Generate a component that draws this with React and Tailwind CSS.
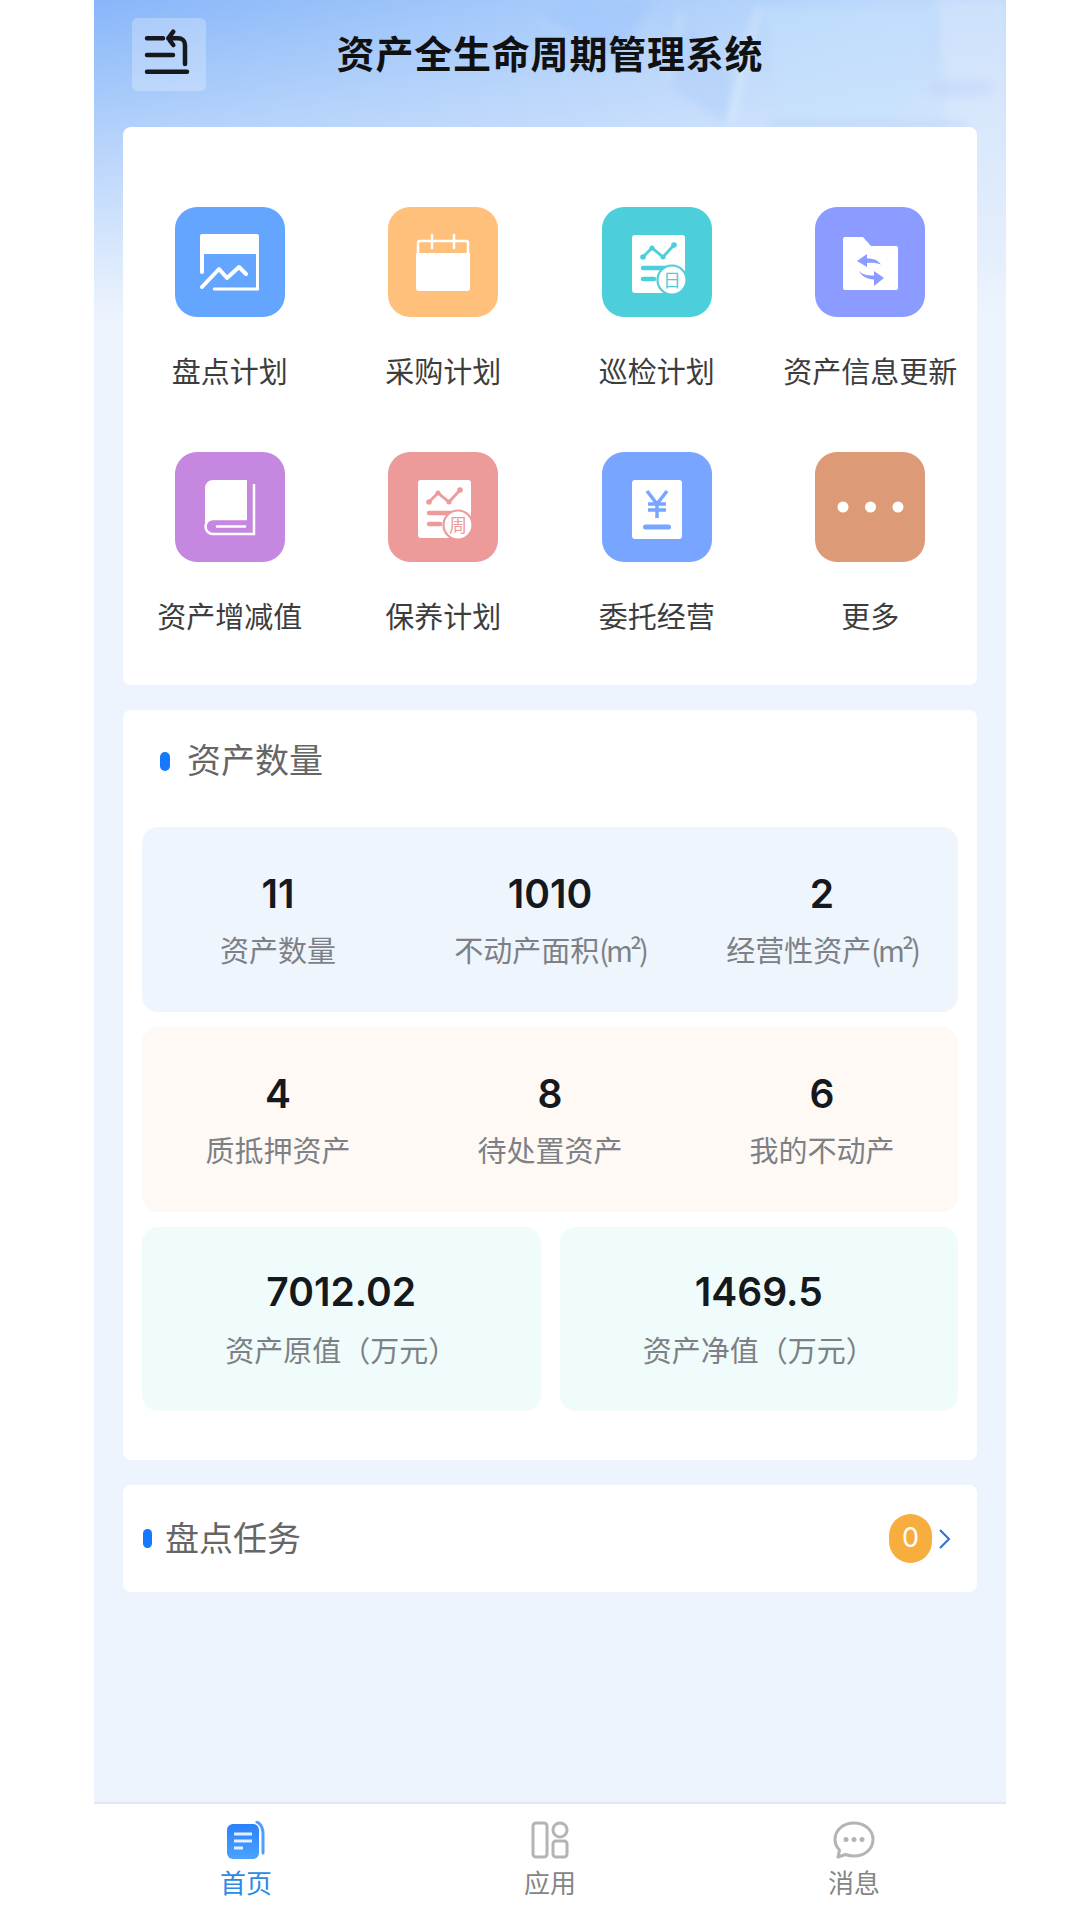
const ChartDoc = ({ color, mark }) => (
  <>
    <path d="M33 28h47a3 3 0 0 1 3 3v42a13 13 0 0 1-13 13H33a3 3 0 0 1-3-3V31a3 3 0 0 1 3-3z" fill="#fff" />
    <polyline points="41,50 50,41 61,50 72,38" fill="none" stroke={color} strokeWidth="2.800" />
    <circle cx="41" cy="50" r="2.800" fill={color} />
    <circle cx="50" cy="41" r="2.500" fill={color} />
    <circle cx="61" cy="50" r="2.500" fill={color} />
    <circle cx="72" cy="38" r="2.800" fill={color} />
    <line x1="41" y1="61" x2="71" y2="61" stroke={color} strokeWidth="4.500" strokeLinecap="round" />
    <line x1="41" y1="72" x2="52" y2="72" stroke={color} strokeWidth="4.500" strokeLinecap="round" />
    <circle cx="70" cy="73" r="14.500" fill="#fff" stroke={color} strokeWidth="2.200" />
    <text x="70" y="79.500" textAnchor="middle" fontSize="18" fill={color} fontFamily="Noto Sans CJK SC, sans-serif">
      {mark}
    </text>
  </>
);

const menuIcons = {
  plan: (
    <>
      <path d="M25 29a2 2 0 0 1 2-2h55a2 2 0 0 1 2 2v54H81V47H29v18a2 2 0 0 1-4 0z" fill="#fff" />
      <polyline points="27,80 44,62 52,71 64,60 71,67" fill="none" stroke="#fff" strokeWidth="4" strokeLinecap="round" strokeLinejoin="round" />
      <rect x="38" y="80.500" width="46" height="3" rx="1" fill="#fff" />
    </>
  ),
  buy: (
    <>
      <path d="M30 47V36a2 2 0 0 1 2-2h46a2 2 0 0 1 2 2v11" fill="none" stroke="#fff" strokeWidth="2.500" />
      <path d="M28 46h54v35a3 3 0 0 1-3 3H31a3 3 0 0 1-3-3z" fill="#fff" />
      <line x1="44" y1="28" x2="44" y2="41" stroke="#fff" strokeWidth="2.500" strokeLinecap="round" />
      <line x1="66" y1="28" x2="66" y2="41" stroke="#fff" strokeWidth="2.500" strokeLinecap="round" />
    </>
  ),
  patrol: <ChartDoc color="#4ccedb" mark="日" />,
  folder: (
    <>
      <path d="M28 32a2 2 0 0 1 2-2h18l8 9h25a2 2 0 0 1 2 2v40a2 2 0 0 1-2 2H30a2 2 0 0 1-2-2z" fill="#fff" />
      <path d="M42 54l10-7v4.500c6 0 11 1.500 14 6-4-1.500-9-2-14-1.500V60z" fill="#8c9bff" />
      <path d="M69 71l-10-7v4.500c-6 .5-11-.5-15-4.500 2 5 8 8 15 8.500V79z" fill="#8c9bff" />
    </>
  ),
  book: (
    <>
      <path d="M38 28h34v39H40c-4 0-8 1-10 4V36a8 8 0 0 1 8-8z" fill="#fff" />
      <path d="M72 67H38a7.500 7.500 0 0 0 0 15h41V32" fill="none" stroke="#fff" strokeWidth="2.500" />
      <line x1="42" y1="74.500" x2="70" y2="74.500" stroke="#fff" strokeWidth="2.500" strokeLinecap="round" />
    </>
  ),
  care: <ChartDoc color="#ed9a9a" mark="周" />,
  trust: (
    <>
      <rect x="30" y="28" width="50" height="59" rx="3" fill="#fff" />
      <path d="M45 39l10 13 10-13M55 52v14M46 52h18M46 58h18" fill="none" stroke="#78a5ff" strokeWidth="3.500" />
      <line x1="43.500" y1="75" x2="66.500" y2="75" stroke="#78a5ff" strokeWidth="5" strokeLinecap="round" />
    </>
  ),
  more: (
    <>
      <circle cx="28" cy="55" r="5.500" fill="#fff" />
      <circle cx="55.500" cy="55" r="5.500" fill="#fff" />
      <circle cx="83" cy="55" r="5.500" fill="#fff" />
    </>
  ),
};

const menus = [
  { name: "盘点计划", icon: "plan", bg: "bg-[#64a5ff]" },
  { name: "采购计划", icon: "buy", bg: "bg-[#ffc07b]" },
  { name: "巡检计划", icon: "patrol", bg: "bg-[#4ccedb]" },
  { name: "资产信息更新", icon: "folder", bg: "bg-[#8c9bff]" },
  { name: "资产增减值", icon: "book", bg: "bg-[#c587df]" },
  { name: "保养计划", icon: "care", bg: "bg-[#ed9a9a]" },
  { name: "委托经营", icon: "trust", bg: "bg-[#78a5ff]" },
  { name: "更多", icon: "more", bg: "bg-[#dc9a77]" },
];

const Unit = () => <span className="tracking-[-3px]">(m²)</span>;

const StatBlock = ({ items, className, labelClass = "mt-[12px]" }) => (
  <div className={`rounded-2xl flex items-center ${className}`}>
    {items.map((item) => (
      <div key={item.value} className="flex-1 flex flex-col items-center">
        <div className="text-[39px] leading-[46px] font-semibold text-[#15181c] font-['Inter','Noto_Sans_CJK_SC',sans-serif]">
          {item.value}
        </div>
        <div className={`${labelClass} text-[29px] leading-[40px] text-[#7d8085] whitespace-nowrap`}>{item.label}</div>
      </div>
    ))}
  </div>
);

const HomeIcon = () => (
  <svg width="40" height="38" viewBox="0 0 40 38">
    <defs>
      <linearGradient id="homeDoc" x1="0" y1="1" x2="0" y2="0">
        <stop offset="0" stopColor="#4aa3ff" />
        <stop offset="1" stopColor="#2a80fb" />
      </linearGradient>
    </defs>
    <rect x="1" y="3" width="32" height="35" rx="6" fill="url(#homeDoc)" />
    <line x1="8" y1="13" x2="26" y2="13" stroke="#e3efff" strokeWidth="3" />
    <line x1="8" y1="20" x2="26" y2="20" stroke="#e3efff" strokeWidth="3" />
    <line x1="8" y1="27" x2="17" y2="27" stroke="#e3efff" strokeWidth="3" />
    <path d="M31 1c4 2 6 6 6 12v19" fill="none" stroke="#4f9eff" strokeWidth="3" strokeLinecap="round" />
  </svg>
);

const AppIcon = () => (
  <svg width="38" height="38" viewBox="0 0 38 38" fill="none" stroke="#b4b4b4" strokeWidth="3">
    <rect x="2" y="2" width="14" height="34" rx="3" />
    <circle cx="29" cy="9" r="7" />
    <rect x="22" y="20" width="14" height="16" rx="3" />
  </svg>
);

const MessageIcon = () => (
  <svg width="42" height="38" viewBox="0 0 42 38">
    <path d="M21 2c10.500 0 19 7 19 16.500S31.500 35 21 35c-3 0-6-.5-8.500-1.500L5 36l1.500-7C3.500 26 2 22.500 2 18.500 2 9 10.500 2 21 2z" fill="none" stroke="#b4b4b4" strokeWidth="3" strokeLinejoin="round" />
    <circle cx="13" cy="18.500" r="2.500" fill="#b4b4b4" />
    <circle cx="21" cy="18.500" r="2.500" fill="#b4b4b4" />
    <circle cx="29" cy="18.500" r="2.500" fill="#b4b4b4" />
  </svg>
);

const tabs = [
  { name: "首页", icon: <HomeIcon />, color: "text-[#2a8ae6]" },
  { name: "应用", icon: <AppIcon />, color: "text-[#858585]" },
  { name: "消息", icon: <MessageIcon />, color: "text-[#858585]" },
];

export default function App() {
  return (
    <div className="w-full min-h-screen bg-white pl-[94px] font-['Noto_Sans_CJK_SC',sans-serif]">
      <div className="relative w-[912px] h-[1920px] flex flex-col overflow-hidden bg-no-repeat bg-[#edf4fd] bg-[linear-gradient(180deg,transparent_0,#edf4fd_320px),linear-gradient(105deg,#87b6f9_0,#bcd8fb_55%,#d3e4fb_100%)]">
        {/* faint shards in the header artwork */}
        <svg className="absolute top-0 left-0 blur-[4px]" width="912" height="300" viewBox="0 0 912 300">
          <polygon points="443,18 473,0 560,0 520,60 490,50" fill="#a0c6fb" opacity="0.6" />
          <polygon points="573,85 593,23 639,77 633,123" fill="#aecdfa" opacity="0.45" />
          <polygon points="669,7 843,7 830,60 800,120 690,125" fill="#c3e2fc" opacity="0.45" />
          <polygon points="843,0 912,0 912,280 860,210" fill="#e4eefd" opacity="0.35" />
          <line x1="588" y1="13" x2="573" y2="85" stroke="#fff" strokeWidth="4" opacity="0.3" />
          <line x1="665" y1="7" x2="636" y2="123" stroke="#fff" strokeWidth="5" opacity="0.4" />
          <line x1="443" y1="18" x2="520" y2="60" stroke="#fff" strokeWidth="4" opacity="0.2" />
          <ellipse cx="866" cy="88" rx="34" ry="10" fill="#bfd5f8" opacity="0.5" />
          <rect x="676" y="121" width="196" height="6" fill="#b6cef5" opacity="0.5" />
        </svg>

        <div className="relative h-[127px] shrink-0 px-[38px] pt-[18px] flex items-start">
          <button className="w-[74px] h-[73px] rounded-md bg-white/25">
            <svg width="74" height="73" viewBox="0 0 74 73" fill="none" stroke="#15181c" strokeWidth="4.500" strokeLinecap="round" strokeLinejoin="round">
              <path d="M15 20.300h16M15 37h26M15 53.700h40" />
              <path d="M53 46V27c0-4-3-6.700-7-6.700H36.300M41.300 13.700l-5 6.600 5 6.700" />
            </svg>
          </button>
          <h1 className="flex-1 text-center text-[38px] leading-[68px] font-bold text-[#111] tracking-[0.800px]">
            资产全生命周期管理系统
          </h1>
          <div className="w-[74px]" />
        </div>

        <div className="relative flex flex-col gap-[25px] px-[29px]">
          <section className="h-[558px] bg-white rounded-lg pt-[80px] grid grid-cols-4 content-start gap-y-[135px]">
            {menus.map((menu) => (
              <div key={menu.name} className="h-[110px] flex flex-col items-center">
                <div className={`w-[110px] h-[110px] shrink-0 rounded-[22px] ${menu.bg}`}>
                  <svg width="110" height="110" viewBox="0 0 110 110">
                    {menuIcons[menu.icon]}
                  </svg>
                </div>
                <div className="mt-[33px] text-[29px] leading-[40px] text-[#3d3d3d] whitespace-nowrap">{menu.name}</div>
              </div>
            ))}
          </section>

          <section className="h-[750px] bg-white rounded-lg px-[19px] pt-[23px]">
            <div className="h-[52px] flex items-center pl-[18px] gap-[17px]">
              <span className="w-[10px] h-[19px] rounded-full bg-[#1677ff] translate-y-[2px]" />
              <span className="text-[34px] leading-[50px] text-[#666]">资产数量</span>
            </div>
            <div className="mt-[42px] flex flex-col gap-[15px]">
              <StatBlock
                className="h-[185px] bg-[#eef5fd]"
                items={[
                  { value: "11", label: "资产数量" },
                  { value: "1010", label: <>不动产面积<Unit /></> },
                  { value: "2", label: <>经营性资产<Unit /></> },
                ]}
              />
              <StatBlock
                className="h-[185px] bg-[#fff9f5]"
                items={[
                  { value: "4", label: "质抵押资产" },
                  { value: "8", label: "待处置资产" },
                  { value: "6", label: "我的不动产" },
                ]}
              />
              <div className="flex gap-[19px]">
                <StatBlock
                  className="flex-1 h-[184px] pb-[1px] bg-[#f0fcfb]"
                  labelClass="mt-[14px]"
                  items={[{ value: "7012.02", label: "资产原值（万元）" }]}
                />
                <StatBlock
                  className="flex-1 h-[184px] pb-[1px] bg-[#f0fcfb]"
                  labelClass="mt-[14px]"
                  items={[{ value: "1469.5", label: "资产净值（万元）" }]}
                />
              </div>
            </div>
          </section>

          <section className="h-[107px] bg-white rounded-lg pl-[20px] pr-[26px] flex items-center">
            <span className="w-[9px] h-[19px] rounded-full bg-[#1677ff]" />
            <span className="ml-[13px] flex-1 text-[34px] leading-[50px] pb-[4px] text-[#666]">盘点任务</span>
            <span className="w-[43px] h-[49px] rounded-full bg-[#f8ae3f] text-white text-[27px] flex items-center justify-center font-['Inter',sans-serif]">
              0
            </span>
            <svg className="ml-[6px]" width="13" height="22" viewBox="0 0 13 22" fill="none" stroke="#2f6fce" strokeWidth="2">
              <path d="M2 2l9 9-9 9" />
            </svg>
          </section>
        </div>

        <nav className="absolute bottom-0 left-0 right-0 h-[118px] bg-white border-t-2 border-[#e3e8f0] grid grid-cols-3 pt-[17px]">
          {tabs.map((tab) => (
            <div key={tab.name} className="flex flex-col items-center">
              <div className="h-[38px] flex items-center">{tab.icon}</div>
              <span className={`mt-[5px] text-[26px] leading-[36px] ${tab.color}`}>{tab.name}</span>
            </div>
          ))}
        </nav>
      </div>
    </div>
  );
}
